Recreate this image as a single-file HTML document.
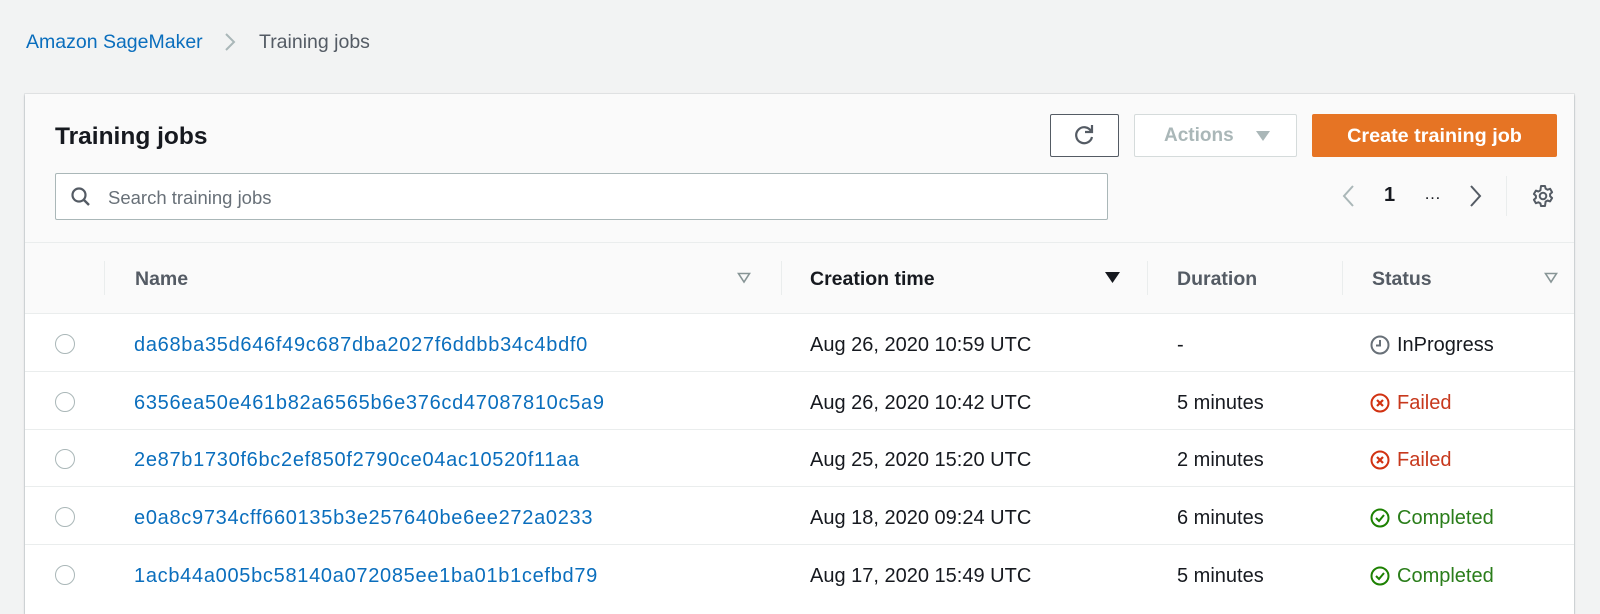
<!DOCTYPE html>
<html><head><meta charset="utf-8"><style>
*{box-sizing:border-box;margin:0;padding:0}
body{width:1600px;height:601px;background:#f2f3f3;font-family:"Liberation Sans",sans-serif;position:relative;overflow:hidden;color:#16191f}
.a{position:absolute;white-space:nowrap}
.panel{position:absolute;left:25px;top:94px;width:1549px;height:520px;background:#fff;box-shadow:0 1px 2px rgba(0,28,36,.3),0 0 0 1px #e5e7e8}
.hd{position:absolute;left:0;top:0;width:100%;height:149px;background:#fafafa;border-bottom:1px solid #eaeded}
.th{position:absolute;left:0;top:149px;width:100%;height:71px;background:#fafafa;border-bottom:1px solid #eaeded}
.row{position:absolute;height:58px;border-bottom:1px solid #eaeded}
.link{color:#0a6ebd;font-size:20px;letter-spacing:.7px}
.cell{font-size:20px;color:#16191f}
.sep{position:absolute;width:1px;height:34px;background:#eaeded}
.hdt{font-size:19.5px;font-weight:bold;color:#545b64}
.radio{position:absolute;width:20px;height:20px;border:1.5px solid #aab7b8;border-radius:50%}
</style></head><body>
<div class="a" style="left:26px;top:31px;font-size:19.5px;color:#0a6ebd">Amazon SageMaker</div>
<svg class="a" style="left:224px;top:32px" width="12" height="20"><path d="M2 2l8 8-8 8" fill="none" stroke="#aab7b8" stroke-width="2"/></svg>
<div class="a" style="left:259px;top:31px;font-size:19.5px;color:#545b64">Training jobs</div>

<div class="panel">
 <div class="hd"></div>
 <div class="th"></div>
</div>
<div class="a" style="left:55px;top:123px;font-size:24.5px;font-weight:bold">Training jobs</div>
<div class="a" style="left:55px;top:173px;width:1053px;height:47px;border:1px solid #aab7b8;border-radius:2px;background:#fff"></div>
<svg class="a" style="left:70px;top:186px" width="22" height="22"><circle cx="9" cy="9" r="6.5" fill="none" stroke="#545b64" stroke-width="2.2"/><path d="M14 14l5 5" stroke="#545b64" stroke-width="2.4"/></svg>
<div class="a" style="left:108px;top:187px;font-size:18.5px;color:#687078">Search training jobs</div>

<div class="a" style="left:1050px;top:114px;width:69px;height:43px;border:1px solid #545b64;border-radius:2px;background:#fff"></div>
<svg class="a" style="left:1073px;top:123px" width="24" height="24"><path d="M18 8A8 8 0 1 0 19 14" fill="none" stroke="#545b64" stroke-width="2.2"/><path d="M19 2v7h-7" fill="none" stroke="#545b64" stroke-width="2.2"/></svg>
<div class="a" style="left:1134px;top:114px;width:163px;height:43px;border:1px solid #d5dbdb;border-radius:2px;background:#fff"></div>
<div class="a" style="left:1164px;top:125px;font-size:19px;font-weight:bold;color:#aab7b8">Actions</div>
<svg class="a" style="left:1255px;top:130px" width="16" height="12"><path d="M1 1h14L8 11z" fill="#aab7b8"/></svg>
<div class="a" style="left:1312px;top:114px;width:245px;height:43px;background:#e67424;border-radius:2px;color:#fff;font-size:19.8px;font-weight:bold;text-align:center;line-height:44px">Create training job</div>

<svg class="a" style="left:1341px;top:184px" width="14" height="24"><path d="M12 2L3 12l9 10" fill="none" stroke="#aab7b8" stroke-width="2"/></svg>
<div class="a" style="left:1384px;top:184px;font-size:20px;font-weight:bold">1</div>
<div class="a" style="left:1424px;top:184px;font-size:17px">…</div>
<svg class="a" style="left:1469px;top:184px" width="14" height="24"><path d="M2 2l9 10-9 10" fill="none" stroke="#545b64" stroke-width="2"/></svg>
<div class="a" style="left:1506px;top:176px;width:1px;height:40px;background:#eaeded"></div>
<svg class="a" style="left:1531px;top:184px" width="24" height="24" viewBox="0 0 24 24"><path d="M10 2h4l.6 2.6 2 1.1 2.5-.9 2 3.4-2 1.8v2.2l2 1.8-2 3.4-2.5-.9-2 1.1L14 22h-4l-.6-2.6-2-1.1-2.5.9-2-3.4 2-1.8v-2.2l-2-1.8 2-3.4 2.5.9 2-1.1z" fill="none" stroke="#545b64" stroke-width="2" stroke-linejoin="round"/><circle cx="12" cy="12" r="3.3" fill="none" stroke="#545b64" stroke-width="2"/></svg>

<div class="sep" style="left:104px;top:261px"></div>
<div class="sep" style="left:781px;top:261px"></div>
<div class="sep" style="left:1147px;top:261px"></div>
<div class="sep" style="left:1342px;top:261px"></div>
<div class="a hdt" style="left:135px;top:268px">Name</div>
<svg class="a" style="left:737px;top:272px" width="14" height="12"><path d="M1.5 1.5h11L7 10z" fill="none" stroke="#879596" stroke-width="1.6"/></svg>
<div class="a hdt" style="left:810px;top:268px;color:#16191f">Creation time</div>
<svg class="a" style="left:1105px;top:272px" width="15" height="12"><path d="M0 0h15L7.5 11z" fill="#16191f"/></svg>
<div class="a hdt" style="left:1177px;top:268px">Duration</div>
<div class="a hdt" style="left:1372px;top:268px">Status</div>
<svg class="a" style="left:1544px;top:272px" width="14" height="12"><path d="M1.5 1.5h11L7 10z" fill="none" stroke="#879596" stroke-width="1.6"/></svg>

<div class="row" style="top:314px;left:25px;width:1549px"></div>
<div class="row" style="top:372px;left:25px;width:1549px"></div>
<div class="row" style="top:429px;left:25px;width:1549px"></div>
<div class="row" style="top:487px;left:25px;width:1549px"></div>

<div class="radio" style="left:55px;top:334px"></div>
<div class="radio" style="left:55px;top:392px"></div>
<div class="radio" style="left:55px;top:449px"></div>
<div class="radio" style="left:55px;top:507px"></div>
<div class="radio" style="left:55px;top:565px"></div>

<div class="a link" style="left:134px;top:334px">da68ba35d646f49c687dba2027f6ddbb34c4bdf0</div>
<div class="a link" style="left:134px;top:392px">6356ea50e461b82a6565b6e376cd47087810c5a9</div>
<div class="a link" style="left:134px;top:449px">2e87b1730f6bc2ef850f2790ce04ac10520f11aa</div>
<div class="a link" style="left:134px;top:507px">e0a8c9734cff660135b3e257640be6ee272a0233</div>
<div class="a link" style="left:134px;top:565px">1acb44a005bc58140a072085ee1ba01b1cefbd79</div>

<div class="a cell" style="left:810px;top:334px">Aug 26, 2020 10:59 UTC</div>
<div class="a cell" style="left:810px;top:392px">Aug 26, 2020 10:42 UTC</div>
<div class="a cell" style="left:810px;top:449px">Aug 25, 2020 15:20 UTC</div>
<div class="a cell" style="left:810px;top:507px">Aug 18, 2020 09:24 UTC</div>
<div class="a cell" style="left:810px;top:565px">Aug 17, 2020 15:49 UTC</div>

<div class="a cell" style="left:1177px;top:334px">-</div>
<div class="a cell" style="left:1177px;top:392px">5 minutes</div>
<div class="a cell" style="left:1177px;top:449px">2 minutes</div>
<div class="a cell" style="left:1177px;top:507px">6 minutes</div>
<div class="a cell" style="left:1177px;top:565px">5 minutes</div>

<svg class="a" style="left:1370px;top:335px" width="20" height="20"><circle cx="10" cy="10" r="8.5" fill="none" stroke="#687078" stroke-width="2"/><path d="M10 5v5.5H6" fill="none" stroke="#687078" stroke-width="2"/></svg>
<div class="a cell" style="left:1397px;top:334px">InProgress</div>
<svg class="a" style="left:1370px;top:393px" width="20" height="20"><circle cx="10" cy="10" r="8.5" fill="none" stroke="#d13212" stroke-width="2"/><path d="M7 7l6 6M13 7l-6 6" stroke="#d13212" stroke-width="2.2"/></svg>
<div class="a cell" style="left:1397px;top:392px;color:#c7381c">Failed</div>
<svg class="a" style="left:1370px;top:450px" width="20" height="20"><circle cx="10" cy="10" r="8.5" fill="none" stroke="#d13212" stroke-width="2"/><path d="M7 7l6 6M13 7l-6 6" stroke="#d13212" stroke-width="2.2"/></svg>
<div class="a cell" style="left:1397px;top:449px;color:#c7381c">Failed</div>
<svg class="a" style="left:1370px;top:508px" width="20" height="20"><circle cx="10" cy="10" r="8.5" fill="none" stroke="#1d8102" stroke-width="2"/><path d="M6 10l3 3 5-6" fill="none" stroke="#1d8102" stroke-width="2"/></svg>
<div class="a cell" style="left:1397px;top:507px;color:#2a7d1a">Completed</div>
<svg class="a" style="left:1370px;top:566px" width="20" height="20"><circle cx="10" cy="10" r="8.5" fill="none" stroke="#1d8102" stroke-width="2"/><path d="M6 10l3 3 5-6" fill="none" stroke="#1d8102" stroke-width="2"/></svg>
<div class="a cell" style="left:1397px;top:565px;color:#2a7d1a">Completed</div>
</body></html>
